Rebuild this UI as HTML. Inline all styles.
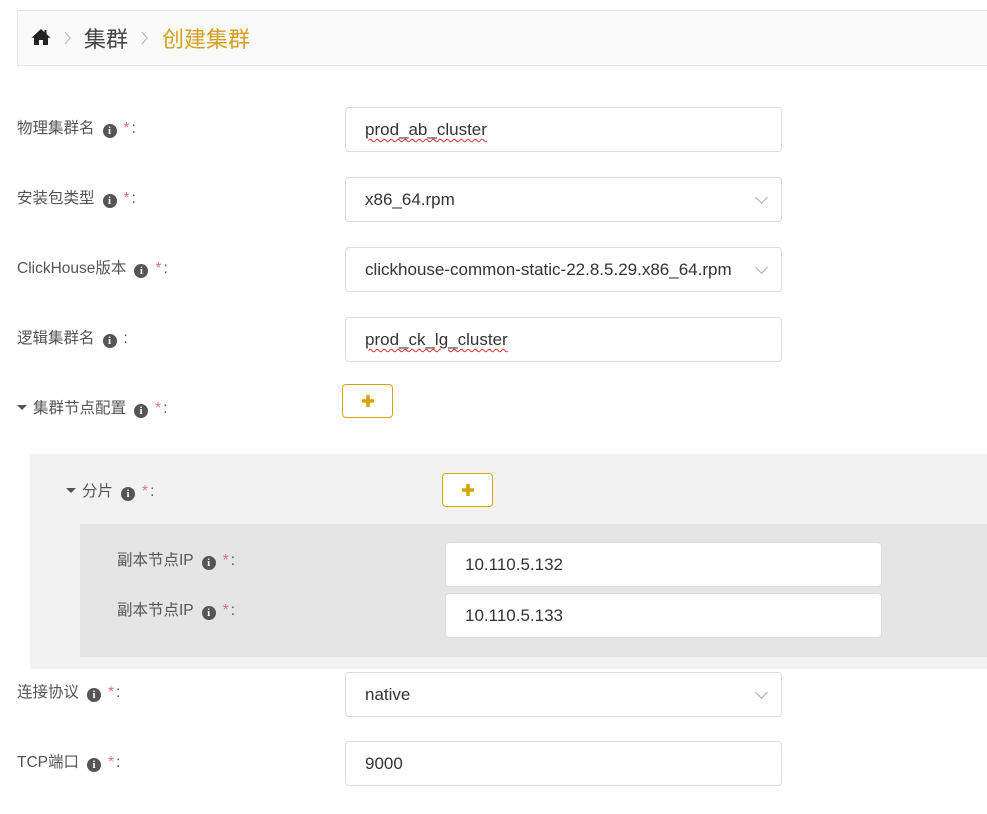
<!DOCTYPE html>
<html><head><meta charset="utf-8"><style>
*{box-sizing:border-box;margin:0;padding:0}
body{width:987px;height:814px;background:#fff;font-family:"Liberation Sans","Noto Sans CJK SC",sans-serif;position:relative;overflow:hidden;color:#555}
.abs{position:absolute}
.bc{left:17px;top:10px;width:980px;height:56px;background:#fafafa;border:1px solid #e6e6e6}
.lbl{position:absolute;font-size:15.5px;color:#555;white-space:nowrap;line-height:20px;transform:translateY(-10px)}
.i{display:inline-block;width:14px;height:14px;border-radius:50%;background:#555;color:#fff;font:bold 11px/14px "Liberation Serif",serif;text-align:center;vertical-align:-1px;margin:0 7px 0 8px}
.st{color:#e0708a;margin-right:2px}
.inp{position:absolute;width:437px;height:45px;background:#fff;border:1px solid #dcdcdc;border-radius:4px;font-size:17px;color:#333;padding-left:19px;line-height:43px}
.sp{text-decoration:underline wavy #e03030;text-decoration-thickness:1px;text-underline-offset:3px}
.chev{position:absolute;right:15px;top:15px;width:9px;height:9px;border-right:1px solid #aaa;border-bottom:1px solid #aaa;transform:rotate(45deg)}
.btn{position:absolute;width:51px;height:34px;border:1px solid #d4a500;border-radius:4px;background:#fff}
.btn svg{position:absolute;left:18px;top:9px}
.tri{display:inline-block;width:0;height:0;border-left:5px solid transparent;border-right:5px solid transparent;border-top:5px solid #555;vertical-align:3px;margin-right:6px}
</style></head><body>
<div class="abs bc"></div>
<svg class="abs" style="left:31px;top:28px" width="20" height="18" viewBox="0 0 20 18"><path d="M10 1 L0.5 9.8 L3 9.8 L3 17 L8 17 L8 12 L12 12 L12 17 L17 17 L17 9.8 L19.5 9.8 L15.5 6 L15.5 2 L13.5 2 L13.5 4.2 Z" fill="#222"/></svg>
<svg class="abs" style="left:64px;top:31px" width="8" height="14"><path d="M1 1 L6 7 L1 13" stroke="#bbb" stroke-width="1.3" fill="none"/></svg>
<div class="abs" style="left:84px;top:22px;font-size:22px;color:#444">集群</div>
<svg class="abs" style="left:141px;top:31px" width="8" height="14"><path d="M1 1 L6 7 L1 13" stroke="#bbb" stroke-width="1.3" fill="none"/></svg>
<div class="abs" style="left:162px;top:22px;font-size:22px;color:#d4a020">创建集群</div>

<div class="lbl" style="left:17px;top:129px">物理集群名<span class="i">i</span><span class="st">*</span>:</div>
<div class="inp" style="left:345px;top:107px"><span class="sp">prod_ab_cluster</span></div>
<div class="lbl" style="left:17px;top:199px">安装包类型<span class="i">i</span><span class="st">*</span>:</div>
<div class="inp" style="left:345px;top:177px">x86_64.rpm<div class="chev"></div></div>
<div class="lbl" style="left:17px;top:269px">ClickHouse版本<span class="i">i</span><span class="st">*</span>:</div>
<div class="inp" style="left:345px;top:247px">clickhouse-common-static-22.8.5.29.x86_64.rpm<div class="chev"></div></div>
<div class="lbl" style="left:17px;top:339px">逻辑集群名<span class="i">i</span>:</div>
<div class="inp" style="left:345px;top:317px"><span class="sp">prod_ck_lg_cluster</span></div>
<div class="lbl" style="left:17px;top:409px"><span class="tri"></span>集群节点配置<span class="i">i</span><span class="st">*</span>:</div>
<div class="btn" style="left:342px;top:384px"><svg width="14" height="14"><path d="M7 1V13M1 7H13" stroke="#d4a500" stroke-width="3.5"/></svg></div>

<div class="abs" style="left:30px;top:454px;width:960px;height:215px;background:#f2f2f2"></div>
<div class="lbl" style="left:66px;top:492px"><span class="tri"></span>分片<span class="i">i</span><span class="st">*</span>:</div>
<div class="btn" style="left:442px;top:473px"><svg width="14" height="14"><path d="M7 1V13M1 7H13" stroke="#d4a500" stroke-width="3.5"/></svg></div>
<div class="abs" style="left:80px;top:524px;width:910px;height:133px;background:#e5e5e5"></div>
<div class="lbl" style="left:117px;top:561px">副本节点IP<span class="i">i</span><span class="st">*</span>:</div>
<div class="inp" style="left:445px;top:542px">10.110.5.132</div>
<div class="lbl" style="left:117px;top:611px">副本节点IP<span class="i">i</span><span class="st">*</span>:</div>
<div class="inp" style="left:445px;top:593px">10.110.5.133</div>

<div class="lbl" style="left:17px;top:693px">连接协议<span class="i">i</span><span class="st">*</span>:</div>
<div class="inp" style="left:345px;top:672px">native<div class="chev"></div></div>
<div class="lbl" style="left:17px;top:763px">TCP端口<span class="i">i</span><span class="st">*</span>:</div>
<div class="inp" style="left:345px;top:741px">9000</div>
</body></html>
